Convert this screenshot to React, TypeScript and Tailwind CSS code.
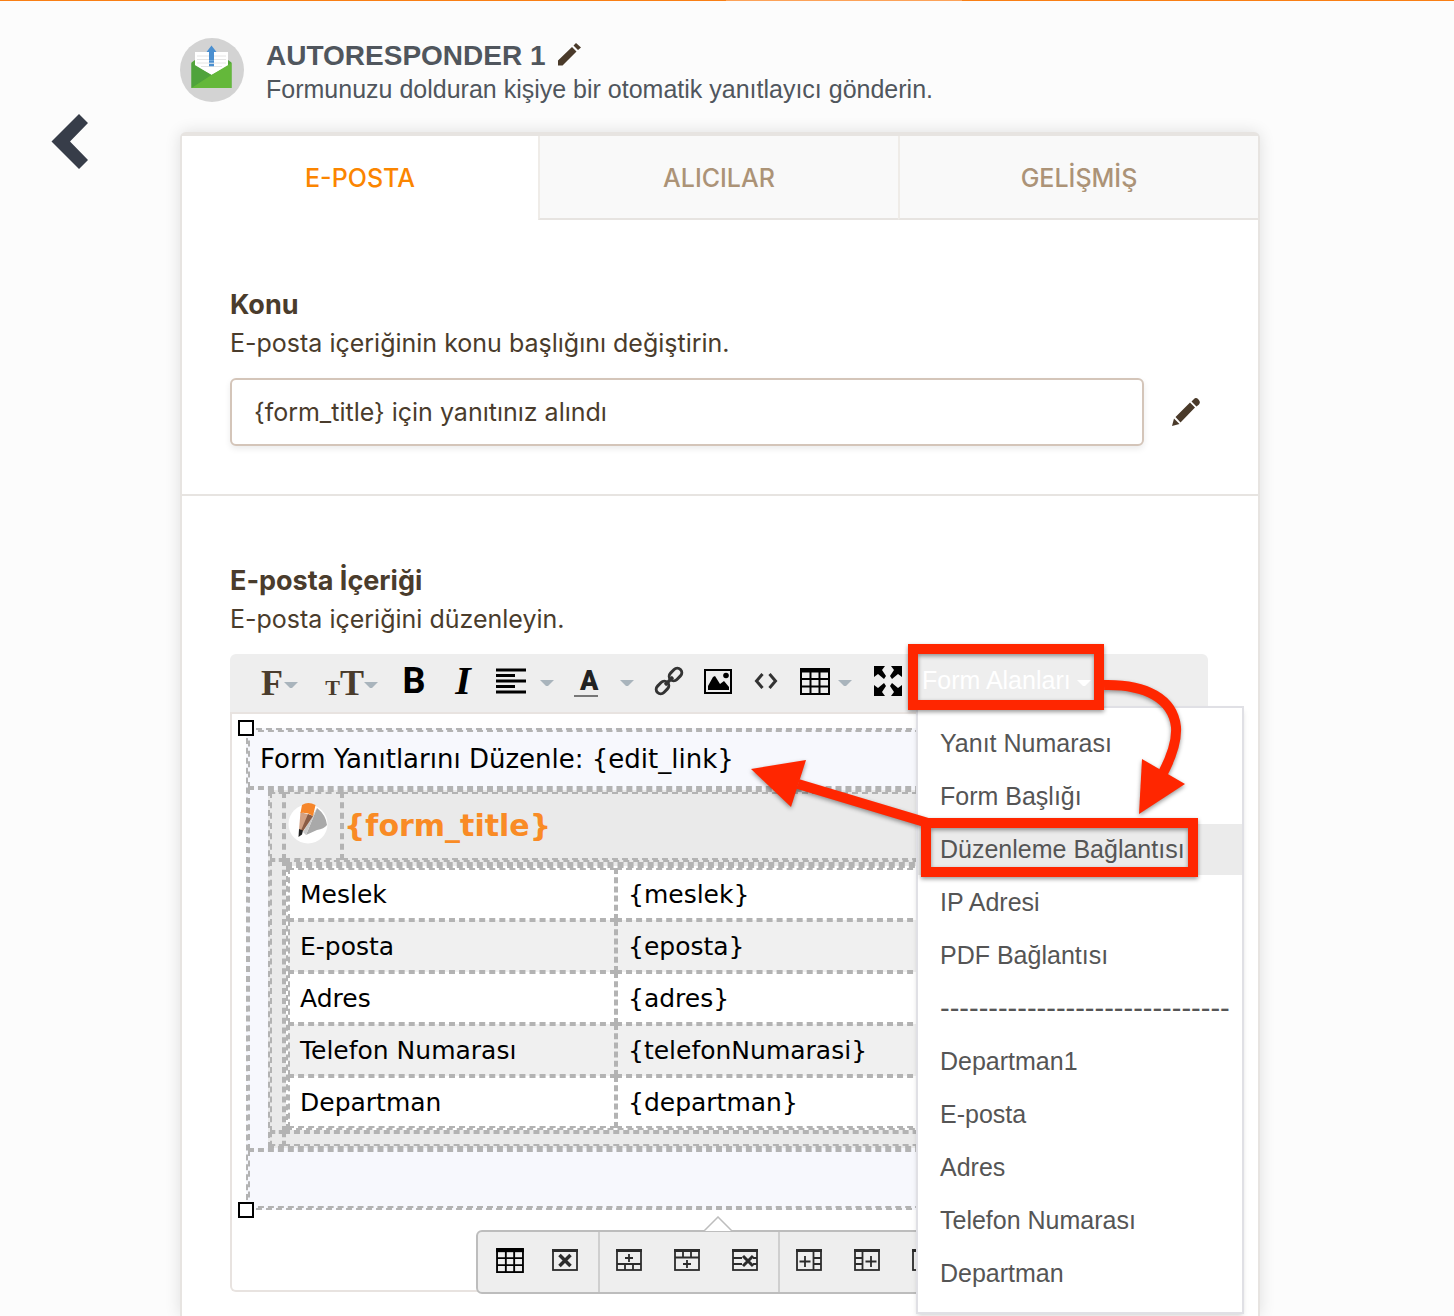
import { useState } from "react";
import type { ReactNode } from "react";

const TABS = ["E-POSTA", "ALICILAR", "GELİŞMİŞ"];

const FIELDS = [
  { label: "Meslek", value: "{meslek}" },
  { label: "E-posta", value: "{eposta}" },
  { label: "Adres", value: "{adres}" },
  { label: "Telefon Numarası", value: "{telefonNumarasi}" },
  { label: "Departman", value: "{departman}" },
];

const SEPARATOR = "------------------------------";

const MENU_ITEMS = [
  "Yanıt Numarası",
  "Form Başlığı",
  "Düzenleme Bağlantısı",
  "IP Adresi",
  "PDF Bağlantısı",
  SEPARATOR,
  "Departman1",
  "E-posta",
  "Adres",
  "Telefon Numarası",
  "Departman",
];

function Caret({ className = "text-[#a9b4bc]" }: { className?: string }) {
  return (
    <svg width="14" height="7" viewBox="0 0 14 7" className={`mt-1 shrink-0 ${className}`}>
      <path d="M0 0h14L8 6H6z" fill="currentColor" />
    </svg>
  );
}

function ToolButton({ label, width, children }: { label: string; width: string; children: ReactNode }) {
  return (
    <button type="button" aria-label={label} className={`flex h-10 shrink-0 items-center ${width}`}>
      {children}
    </button>
  );
}

function GridIcon({ width, height }: { width: number; height: number }) {
  return (
    <svg width={width} height={height} viewBox="0 0 30 27" className="shrink-0">
      <rect x="1" y="1" width="28" height="25" fill="none" stroke="#000" strokeWidth="2" />
      <path d="M0 2.5h30" stroke="#000" strokeWidth="4" />
      <path d="M1 11h28M1 18.500h28M10.500 3v23M19.500 3v23" stroke="#000" strokeWidth="2" />
    </svg>
  );
}

function SmallTableIcon({ children }: { children: ReactNode }) {
  return (
    <svg width="26" height="22" viewBox="0 0 26 22" fill="none" stroke="#2b2b2b" strokeWidth="1.800">
      <rect x="1" y="1" width="24" height="20" />
      <path d="M0 1.500h26" strokeWidth="3" />
      {children}
    </svg>
  );
}

function MailBadge() {
  return (
    <svg width="64" height="64" viewBox="0 0 64 64" className="shrink-0">
      <circle cx="32" cy="32" r="32" fill="#d3d3d3" />
      <path d="M11.500 24.500 15 22h33l3.500 2.500V50h-40z" fill="#55a53b" />
      <path d="M15 14h33v14L31.500 37 15 28z" fill="#fff" />
      <path d="M17 18h29M17 21.500h29M17 25h29M21 28.500h21" stroke="#e4e4e4" strokeWidth="1" />
      <path d="M11.500 25 31.500 37 11.500 50z" fill="#4fa33c" />
      <path d="M51.500 25 31.500 37 11.500 50h40z" fill="#64b83a" />
      <path d="M31.500 7.500 36.500 14H34v8h-5v-8h-2.500z" fill="#4a8fd0" />
      <path d="M29 23.500h5M29 27h5" stroke="#4a8fd0" strokeWidth="2.500" />
    </svg>
  );
}

function EditorToolbar() {
  return (
    <div className="flex h-[60px] items-center gap-5 rounded-t-md border-b-2 border-[#e8e3e0] bg-[#eeeeee] pb-1 pl-[30px]">
      <ToolButton label="Yazı tipi" width="w-[38px] justify-between pt-1">
        <span className="w-6 font-['Liberation_Serif',serif] text-[36px] leading-none font-bold text-[#4a3c2c]">F</span>
        <Caret />
      </ToolButton>
      <ToolButton label="Yazı boyutu" width="w-[60px] justify-end pt-1">
        <span className="font-['Liberation_Serif',serif] text-[36px] leading-none font-bold text-[#4a3c2c]">
          <span className="text-[22px]">T</span>T
        </span>
        <Caret />
      </ToolButton>
      <ToolButton label="Kalın" width="w-[32px] justify-center">
        <span className="font-[Roboto,sans-serif] text-[36px] leading-none font-bold text-black">B</span>
      </ToolButton>
      <ToolButton label="İtalik" width="w-[26px] justify-center">
        <span className="font-['Liberation_Serif',serif] text-[40px] leading-none font-bold text-black italic">I</span>
      </ToolButton>
      <ToolButton label="Hizala" width="w-[58px] justify-between">
        <svg width="30" height="26" viewBox="0 0 30 26" stroke="#000" strokeWidth="3">
          <path d="M0 2h30M0 7.500h19M0 13h30M0 18.500h19M0 24h30" />
        </svg>
        <Caret />
      </ToolButton>
      <ToolButton label="Yazı rengi" width="w-[60px] justify-between">
        <span className="h-[32px] w-6 border-b-2 border-[#777] pl-1.5 font-[Roboto,sans-serif] text-[27px] leading-[32px] font-black text-[#222]">
          A
        </span>
        <Caret />
      </ToolButton>
      <ToolButton label="Bağlantı" width="w-[30px]">
        <svg width="30" height="30" viewBox="0 0 30 30" fill="none" stroke="#333" strokeWidth="3" className="shrink-0">
          <rect x="-7" y="-4.500" width="14" height="9" rx="4.500" transform="translate(21.500 8.500) rotate(-45)" />
          <rect x="-7" y="-4.500" width="14" height="9" rx="4.500" transform="translate(8.500 21.500) rotate(-45)" />
          <path d="m11 19 8-8" strokeWidth="3.200" />
        </svg>
      </ToolButton>
      <ToolButton label="Resim" width="w-[28px]">
        <svg width="28" height="25" viewBox="0 0 28 25">
          <rect x="1" y="1" width="26" height="23" fill="none" stroke="#000" strokeWidth="2" />
          <circle cx="22" cy="6.500" r="2.800" />
          <path d="M4 21v-4l5-9 2-1 5 8 4-3 5 6v3z" />
        </svg>
      </ToolButton>
      <ToolButton label="Kaynak kodu" width="w-[28px] justify-center">
        <svg width="24" height="16" viewBox="0 0 24 16" fill="none" stroke="#333" strokeWidth="3">
          <path d="m8.500 1-6 7 6 7M15.500 1l6 7-6 7" />
        </svg>
      </ToolButton>
      <ToolButton label="Tablo" width="w-[52px] justify-between">
        <GridIcon width={30} height={27} />
        <Caret />
      </ToolButton>
      <ToolButton label="Tam ekran" width="w-[30px] justify-end">
        <svg width="28" height="30" viewBox="0 0 28 30">
          <path d="M0 0h11L8 4l4 6-2 3-6-5-4 3zM28 0H17l3 4-4 6 2 3 6-5 4 3zM0 30h11l-3-4 4-6-2-3-6 5-4-3zM28 30H17l3-4-4-6 2-3 6 5 4-3z" />
        </svg>
      </ToolButton>
      <button type="button" className="flex h-10 shrink-0 items-center gap-1.5 text-[25px] text-white">
        Form Alanları
        <Caret className="text-white" />
      </button>
    </div>
  );
}

function PencilLogo() {
  return (
    <svg width="40" height="42" viewBox="0 0 40 42">
      <circle cx="20" cy="22" r="19.500" fill="#fff" />
      <path d="M29 6q9 7 10 17-3 4-10 5l-11 5z" fill="#a9a9a9" />
      <path d="M29 6 18 33l-3-3z" fill="#c9c9c9" />
      <path d="m12.500 10 12.500 4-10 15-4-1z" fill="#d2a184" />
      <path d="m20 12 5 2-10 15-2-.500z" fill="#8a5c45" />
      <path d="M14 3q6-4 13.500 0L25 14q-6-4-12.500-3z" fill="#f6862a" />
      <path d="m11 27 4 1.500-1 4-3.500 2.500z" fill="#222" />
    </svg>
  );
}

function EmailBody() {
  return (
    <div className="flex-1 border-2 border-dashed border-[#b3b3b3] bg-[#f7f8fd] font-['DejaVu_Sans',sans-serif] text-[25px] text-black">
      <p className="h-[58px] border-2 border-dashed border-[#b3b3b3] pl-2.5 text-[26px] leading-[54px]">
        Form Yanıtlarını Düzenle: {"{edit_link}"}
      </p>
      <div className="border-2 border-dashed border-[#b3b3b3] px-[18px]">
        <div className="border-2 border-dashed border-[#b3b3b3] bg-[#eaeaea]">
          <div className="flex h-[68px]">
            <div className="w-[14px] border-2 border-dashed border-[#b3b3b3]" />
            <div className="w-[58px] border-2 border-dashed border-[#b3b3b3] pt-2 pl-0.5">
              <PencilLogo />
            </div>
            <div className="flex-1 border-2 border-dashed border-[#b3b3b3] text-[30px] leading-[64px] font-bold text-[#f98b25]">
              {"{form_title}"}
            </div>
          </div>
          <div className="flex">
            <div className="w-[14px] border-2 border-dashed border-[#b3b3b3]" />
            <div className="flex-1 border-2 border-dashed border-[#b3b3b3]">
              <div className="border-t-2 border-dashed border-[#b3b3b3]">
                <div className="border-t-2 border-dashed border-[#b3b3b3]">
                  <table className="w-full table-fixed border-separate border-spacing-0 border-2 border-dashed border-[#b3b3b3] bg-white">
                    <colgroup>
                      <col className="w-[328px]" />
                      <col />
                    </colgroup>
                    <tbody>
                      {FIELDS.map((field) => (
                        <tr key={field.label} className="h-[52px] even:bg-[#f0f0f0]">
                          <th scope="row" className="border-2 border-dashed border-[#b3b3b3] p-0 pt-0.5 pl-2.5 text-left leading-[46px] font-normal">
                            {field.label}
                          </th>
                          <td className="border-2 border-dashed border-[#b3b3b3] p-0 pt-0.5 pl-2.5 leading-[46px]">{field.value}</td>
                        </tr>
                      ))}
                    </tbody>
                  </table>
                </div>
              </div>
            </div>
          </div>
          <div className="flex h-[14px]">
            <div className="w-[14px] border-2 border-dashed border-[#b3b3b3]" />
            <div className="flex-1 border-2 border-dashed border-[#b3b3b3]" />
          </div>
        </div>
      </div>
      <div className="h-[58px] border-2 border-dashed border-[#b3b3b3]" />
    </div>
  );
}

function TableTools() {
  return (
    <div className="absolute top-[576px] left-[246px] w-[484px] rounded-md border-2 border-[#bdbdbd] bg-[#eeeeee]">
      <svg width="30" height="16" viewBox="0 0 30 16" className="absolute -top-4 left-[225px]">
        <path d="M1 15 15 1l14 14" fill="#fff" stroke="#bdbdbd" strokeWidth="1.500" />
      </svg>
      <div className="flex h-[60px] overflow-hidden text-[#2b2b2b]">
        <div className="flex w-[122px] shrink-0 items-center gap-7 border-r-2 border-[#cfcfcf] pb-1 pl-[18px]">
          <button type="button" aria-label="Tablo özellikleri">
            <GridIcon width={28} height={25} />
          </button>
          <button type="button" aria-label="Tabloyu sil">
            <SmallTableIcon>
              <path d="m7.500 6 11 11M18.500 6l-11 11" strokeWidth="3.500" />
            </SmallTableIcon>
          </button>
        </div>
        <div className="flex w-[180px] shrink-0 items-center gap-8 border-r-2 border-[#cfcfcf] pb-1 pl-4">
          <button type="button" aria-label="Üste satır ekle">
            <SmallTableIcon>
              <path d="M1 15h24M9 15v6M17 15v6M13 5v8M9 9h8" />
            </SmallTableIcon>
          </button>
          <button type="button" aria-label="Alta satır ekle">
            <SmallTableIcon>
              <path d="M1 8.500h24M9 3v5.500M17 3v5.500M13 11v8M9 15h8" />
            </SmallTableIcon>
          </button>
          <button type="button" aria-label="Satırı sil">
            <SmallTableIcon>
              <path d="M1 9h9M1 15h9M21 9h4M21 15h4" />
              <path d="m11 7 10 10M21 7 11 17" strokeWidth="3" />
            </SmallTableIcon>
          </button>
        </div>
        <div className="flex flex-1 items-center gap-8 pb-1 pl-4">
          <button type="button" aria-label="Sola sütun ekle">
            <SmallTableIcon>
              <path d="M17.500 3v18M17.500 9H25M17.500 15H25M9 7v11M3.500 12.500h11" />
            </SmallTableIcon>
          </button>
          <button type="button" aria-label="Sağa sütun ekle">
            <SmallTableIcon>
              <path d="M8.500 3v18M1 9h7.500M1 15h7.500M17 7v11M11.500 12.500h11" />
            </SmallTableIcon>
          </button>
          <button type="button" aria-label="Sütunu sil">
            <SmallTableIcon>
              <path d="M9 3v5M17 3v5M9 17v4M17 17v4" />
            </SmallTableIcon>
          </button>
        </div>
      </div>
    </div>
  );
}

function FieldMenu() {
  return (
    <ul className="absolute top-[52px] left-[686px] w-[328px] border-2 border-[#e0e0e5] bg-white pt-2.5 pb-[11px] text-[25px] text-[#555] shadow-md">
      {MENU_ITEMS.map((item, i) => (
        <li key={i} className="pb-0.5">
          <button
            type="button"
            className={`block h-[51px] w-full overflow-hidden pl-[22px] text-left leading-[51px] whitespace-nowrap ${
              item === SEPARATOR ? "text-[29px]" : ""
            } ${i === 2 ? "bg-[#ebebeb]" : ""}`}
          >
            {item}
          </button>
        </li>
      ))}
    </ul>
  );
}

// Red callouts pointing from the menu to the inserted {edit_link}
function Callouts() {
  return (
    <svg
      width="978"
      height="640"
      viewBox="230 654 978 640"
      className="pointer-events-none absolute top-0 left-0 overflow-visible drop-shadow-[0_2px_2px_rgba(0,0,0,0.4)]"
    >
      <g fill="none" stroke="#ff2600" strokeWidth="10">
        <rect x="913" y="649" width="186" height="56" />
        <rect x="926" y="823" width="267" height="49" />
        <path d="M1104 685C1146 684 1173 699 1176 727C1177 741 1171 758 1162 775" />
        <path d="M928 823 798 784" />
      </g>
      <g fill="#ff2600">
        <path d="M1142 759 1185 784 1139 814z" />
        <path d="M751 769 806 760 791 807z" />
      </g>
    </svg>
  );
}

export default function App() {
  const [tab, setTab] = useState(0);
  const [subject, setSubject] = useState("{form_title} için yanıtınız alındı");

  return (
    <div lang="tr" className="flex min-h-screen flex-col bg-[#fcfcfc] font-['Liberation_Sans',Arial,sans-serif]">
      <div className="grid h-px grid-cols-[726fr_236fr_492fr] bg-[#f97f14]">
        <span />
        <span className="bg-[#fca258]" />
      </div>

      <div className="grid flex-1 grid-cols-[180px_1fr_194px] pt-[37px]">
        <div className="pt-[76px] pl-[51px]">
          <button type="button" aria-label="Geri">
            <svg width="38" height="56" viewBox="0 0 38 56">
              <path d="M28 0 37 9 19 27.500 37 46 28 55 .5 27.500z" fill="#373d49" />
            </svg>
          </button>
        </div>

        <main className="flex flex-col">
          <header className="mb-7 flex h-[66px] gap-[22px] text-[#50565d]">
            <MailBadge />
            <div>
              <div className="flex items-center gap-3">
                <h1 className="text-[28px] leading-9 font-bold">AUTORESPONDER 1</h1>
                <button type="button" aria-label="Adı düzenle">
                  <svg width="23" height="23" viewBox="0 0 23 23" fill="#4a3a2a" className="mb-1">
                    <path d="M0 22.500v-5L14 4l4.500 4.500L4.500 22.500zM15.500 2.500 18 0l5 4.500L20 7z" />
                  </svg>
                </button>
              </div>
              <p className="text-[25px] leading-[30px]">Formunuzu dolduran kişiye bir otomatik yanıtlayıcı gönderin.</p>
            </div>
          </header>

          <div className="flex-1 rounded-t-md border-x-2 border-t-4 border-[#e7e4e1] bg-white font-[Inter,sans-serif] text-[#4a3c2c] shadow-[0_0_16px_rgba(0,0,0,0.12)]">
            <div role="tablist" className="grid grid-cols-[356fr_360fr_360fr]">
              {TABS.map((name, i) => (
                <button
                  key={name}
                  type="button"
                  role="tab"
                  aria-selected={tab === i}
                  onClick={() => setTab(i)}
                  className={`h-[84px] text-[25px] font-medium ${
                    tab === i
                      ? "bg-white pt-0.5 text-[#fb8500]"
                      : "border-b-2 border-l-2 border-b-[#e7e4e1] border-l-[#efece8] bg-[#f9f9f9] pt-1 text-[#ac9377]"
                  }`}
                >
                  {name}
                </button>
              ))}
            </div>

            <section className="border-b-2 border-[#e7e4e1] px-12 pt-[66px] pb-12">
              <label htmlFor="subject" className="block text-[27px] leading-[38px] font-bold">
                Konu
              </label>
              <p className="text-[25px] leading-[38px]">E-posta içeriğinin konu başlığını değiştirin.</p>
              <div className="mt-4 flex items-center gap-7 pr-[10px]">
                <input
                  id="subject"
                  value={subject}
                  onChange={(e) => setSubject(e.target.value)}
                  className="h-[68px] min-w-0 flex-1 rounded-md border-2 border-[#d4c5b9] bg-white px-[22px] text-[25px] shadow-[0_3px_6px_rgba(0,0,0,0.08)] outline-none"
                />
                <button type="button" aria-label="Konuyu düzenle">
                  <svg width="28" height="28" viewBox="0 0 28 28" fill="#4a3a2a">
                    <path d="M0 28 2 20.500 7.500 26zM3.500 19 18 4.500l5 5L8.500 24.500zM19.500 3.500 22 1q2-2 4.500.5t.5 5L24.500 8.500z" />
                  </svg>
                </button>
              </div>
            </section>

            <section className="px-12 pt-[66px] pb-6">
              <h2 className="text-[27px] leading-[38px] font-bold">E-posta İçeriği</h2>
              <p className="text-[25px] leading-[38px]">E-posta içeriğini düzenleyin.</p>
              <div className="relative mt-4 max-w-[978px] font-['Liberation_Sans',Arial,sans-serif]">
                <EditorToolbar />
                <div className="relative flex h-[578px] items-start rounded-b-md border-x-2 border-b-2 border-[#e8e3e0] px-[14px] pt-[14px]">
                  <EmailBody />
                  <span className="absolute top-1.5 left-1.5 size-4 border-2 border-black bg-white" />
                  <span className="absolute top-[488px] left-1.5 size-4 border-2 border-black bg-white" />
                </div>
                <TableTools />
                <FieldMenu />
                <Callouts />
              </div>
            </section>
          </div>
        </main>
      </div>
    </div>
  );
}
